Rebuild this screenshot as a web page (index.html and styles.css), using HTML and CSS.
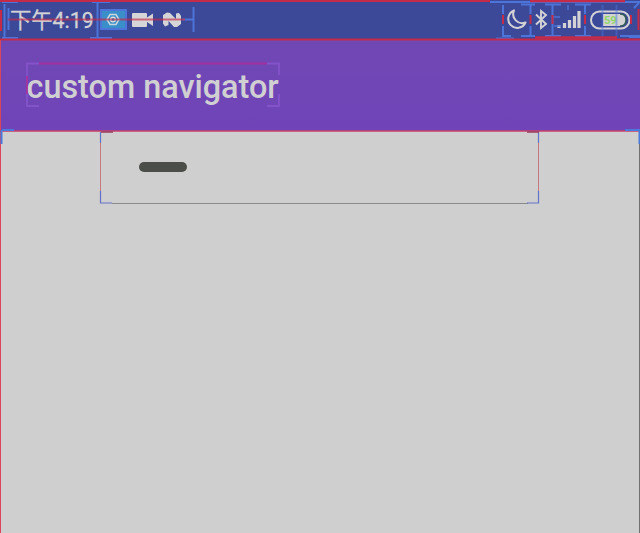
FILE: index.html
```html
<!DOCTYPE html>
<html lang="zh-CN">
<head>
<meta charset="utf-8">
<title>custom navigator</title>
<link rel="stylesheet" href="styles.css">
</head>
<body>
<div class="screen">
  <header class="status">
    <span class="clock">下午4:19</span>
    <svg class="notices" width="84" height="24" viewBox="100 8 84 24">
      <rect x="102" y="10" width="23" height="19" fill="#3a8fc8"/>
      <path d="M107 19.500L110 14.500H116L119 19.500L116 24.500H110Z" fill="none" stroke="#c5d7df" stroke-width="1.500"/>
      <circle cx="113" cy="19.500" r="2.300" fill="none" stroke="#d7dddd" stroke-width="1.500"/>
      <path d="M133 13H146Q147 13 147 14V17.500L153 13.500V26L147 22V26Q147 27 146 27H133Q132 27 132 26V14Q132 13 133 13Z" fill="#d5d5d7"/>
      <path d="M163 15L167 12.500L170 13L176 19V13.500L179 13L181 16V24L177 27H174L168.500 21V25L165 26.500L163 23.500Z" fill="#d5d5d7"/>
    </svg>
    <svg class="system" width="130" height="28" viewBox="504 6 130 28">
      <path d="M514 10.500A9 9 0 1 0 525.500 22.500A9 9 0 0 1 514 10.500Z" fill="none" stroke="#d3d3d6" stroke-width="2" stroke-linejoin="round"/>
      <path d="M536 14.500L546 24L541 28V11L546 15L536 24.500" fill="none" stroke="#d3d3d6" stroke-width="1.900"/>
      <path d="M559 25V28M564.500 23V28M569.500 20V28M574.500 16V28M579 11V28" stroke="#d3d3d6" stroke-width="3.200"/>
      <rect x="591" y="11.500" width="38.500" height="17" rx="8.500" fill="none" stroke="#d3d3d6" stroke-width="2"/>
      <path d="M603 14H620Q626 14 626 20T620 26H603Z" fill="#d3d3d3"/>
      <path d="M620 14Q626 14 626 20T620 26" fill="none" stroke="#315d55" stroke-width="1.500"/>
      <text class="charge" x="604" y="24">59</text>
    </svg>
  </header>
  <div class="appbar"><h1 class="title">custom navigator</h1></div>
  <main class="content">
    <div class="panel"><div class="handle"></div></div>
  </main>
  <svg class="bounds" width="640" height="533" viewBox="0 0 640 533">
    <g fill="none" stroke="#4d74d8" stroke-width="2">
      <path d="M2 2H18M2 38H18M4.500 4V37M8.500 8V30M97.500 2V38M92 2H110M90 38H112M101 10H126V29H101ZM193.500 7V32M182 19.500H193"/>
      <path d="M490 2H640M496 38.500H514M503 5V14M503 26V36H511M521 4.500H535M530.500 5V14M530.500 26V36M521 36H535M545 4.500H561M552.500 5V36M545 36H561M575 4.500H591M585 5V14M585 26V36M575 36H591M620 36H640M634 8L639 3M629 37L640 37"/>
      <path d="M602.500 5V37M616.500 5V37" opacity=".45"/>
      <path d="M553 17H560M554 26H561M568 5V10" opacity=".7"/>
    </g>
    <g fill="none" stroke="#c42b48" stroke-width="2">
      <path d="M0 1H490M0 39.500H640" stroke-width="1.800"/>
      <path d="M8 19.500H185" opacity=".65"/>
      <path d="M503 15V24M530.500 15V24M552.500 15V24M585 15V24M631 15V24M1 10V31M638.500 9V30"/>
      <path d="M530 1H625M535 37.500H617" stroke-width="2.500"/>
    </g>
    <path d="M.5 40V533" stroke="#db455c"/>
    <path d="M0 131H640" stroke="#c64068" stroke-width="1.600"/>
    <path d="M39 63.500H267" stroke="#a3309f" stroke-width="2"/>
    <path d="M27 76V94" stroke="#b5309d" stroke-width="1.500"/>
    <path d="M27 76V63.500H39M27 94V106H39M267 63.500H279V75M279 94V106H267" fill="none" stroke="#8353c9" stroke-width="1.800"/>
    <path d="M100.500 143V191M538.500 143V191" stroke="#c47982"/>
    <path d="M112 203.500H528" stroke="#89898b"/>
    <path d="M100.500 132V143M100.500 191V203H112M538.500 132V143M538.500 191V203H527" fill="none" stroke="#6572c9" stroke-width="1.200"/>
    <path d="M101 132H113M527 132H539" stroke="#993c62" stroke-width="1.500"/>
    <path d="M2 130H14M1.500 130V144M625 130H640M639.500 130V144" stroke="#4879dc" stroke-width="2"/>
    <path d="M639.500 144V533" stroke="#707070"/>
  </svg>
</div>
</body>
</html>
```
FILE: styles.css
```css
* { box-sizing: border-box; }
body { margin: 0; overflow: hidden; font-family: Roboto, "Noto Sans CJK SC", sans-serif; }
.screen { position: relative; display: flex; flex-direction: column; width: 640px; height: 533px; background: #cfcfcf; }
.status { display: flex; align-items: center; height: 40px; padding: 0 6px 0 10px; background: #3c4998; }
.clock { width: 90px; padding-top: 2px; font-size: 21.300px; line-height: 40px; white-space: nowrap; color: #d3d3d6; -webkit-text-stroke: .3px #d3d3d6; }
.system { margin-left: auto; }
.charge { font-size: 11px; font-weight: 700; fill: #91d66b; }
.appbar { display: flex; align-items: center; height: 91px; padding: 3px 26.500px 0; background: linear-gradient(#7048b4, #7044b8); }
.title { margin: 0; font-size: 32.400px; font-weight: 500; line-height: 42px; color: #d0d0d3; white-space: nowrap; }
.content { flex: 1; padding: 0 100px; }
.panel { height: 73px; padding: 31px 39px; }
.handle { width: 48px; height: 10px; border-radius: 5px; background: #4b4d49; }
.bounds { position: absolute; inset: 0; pointer-events: none; }
```
